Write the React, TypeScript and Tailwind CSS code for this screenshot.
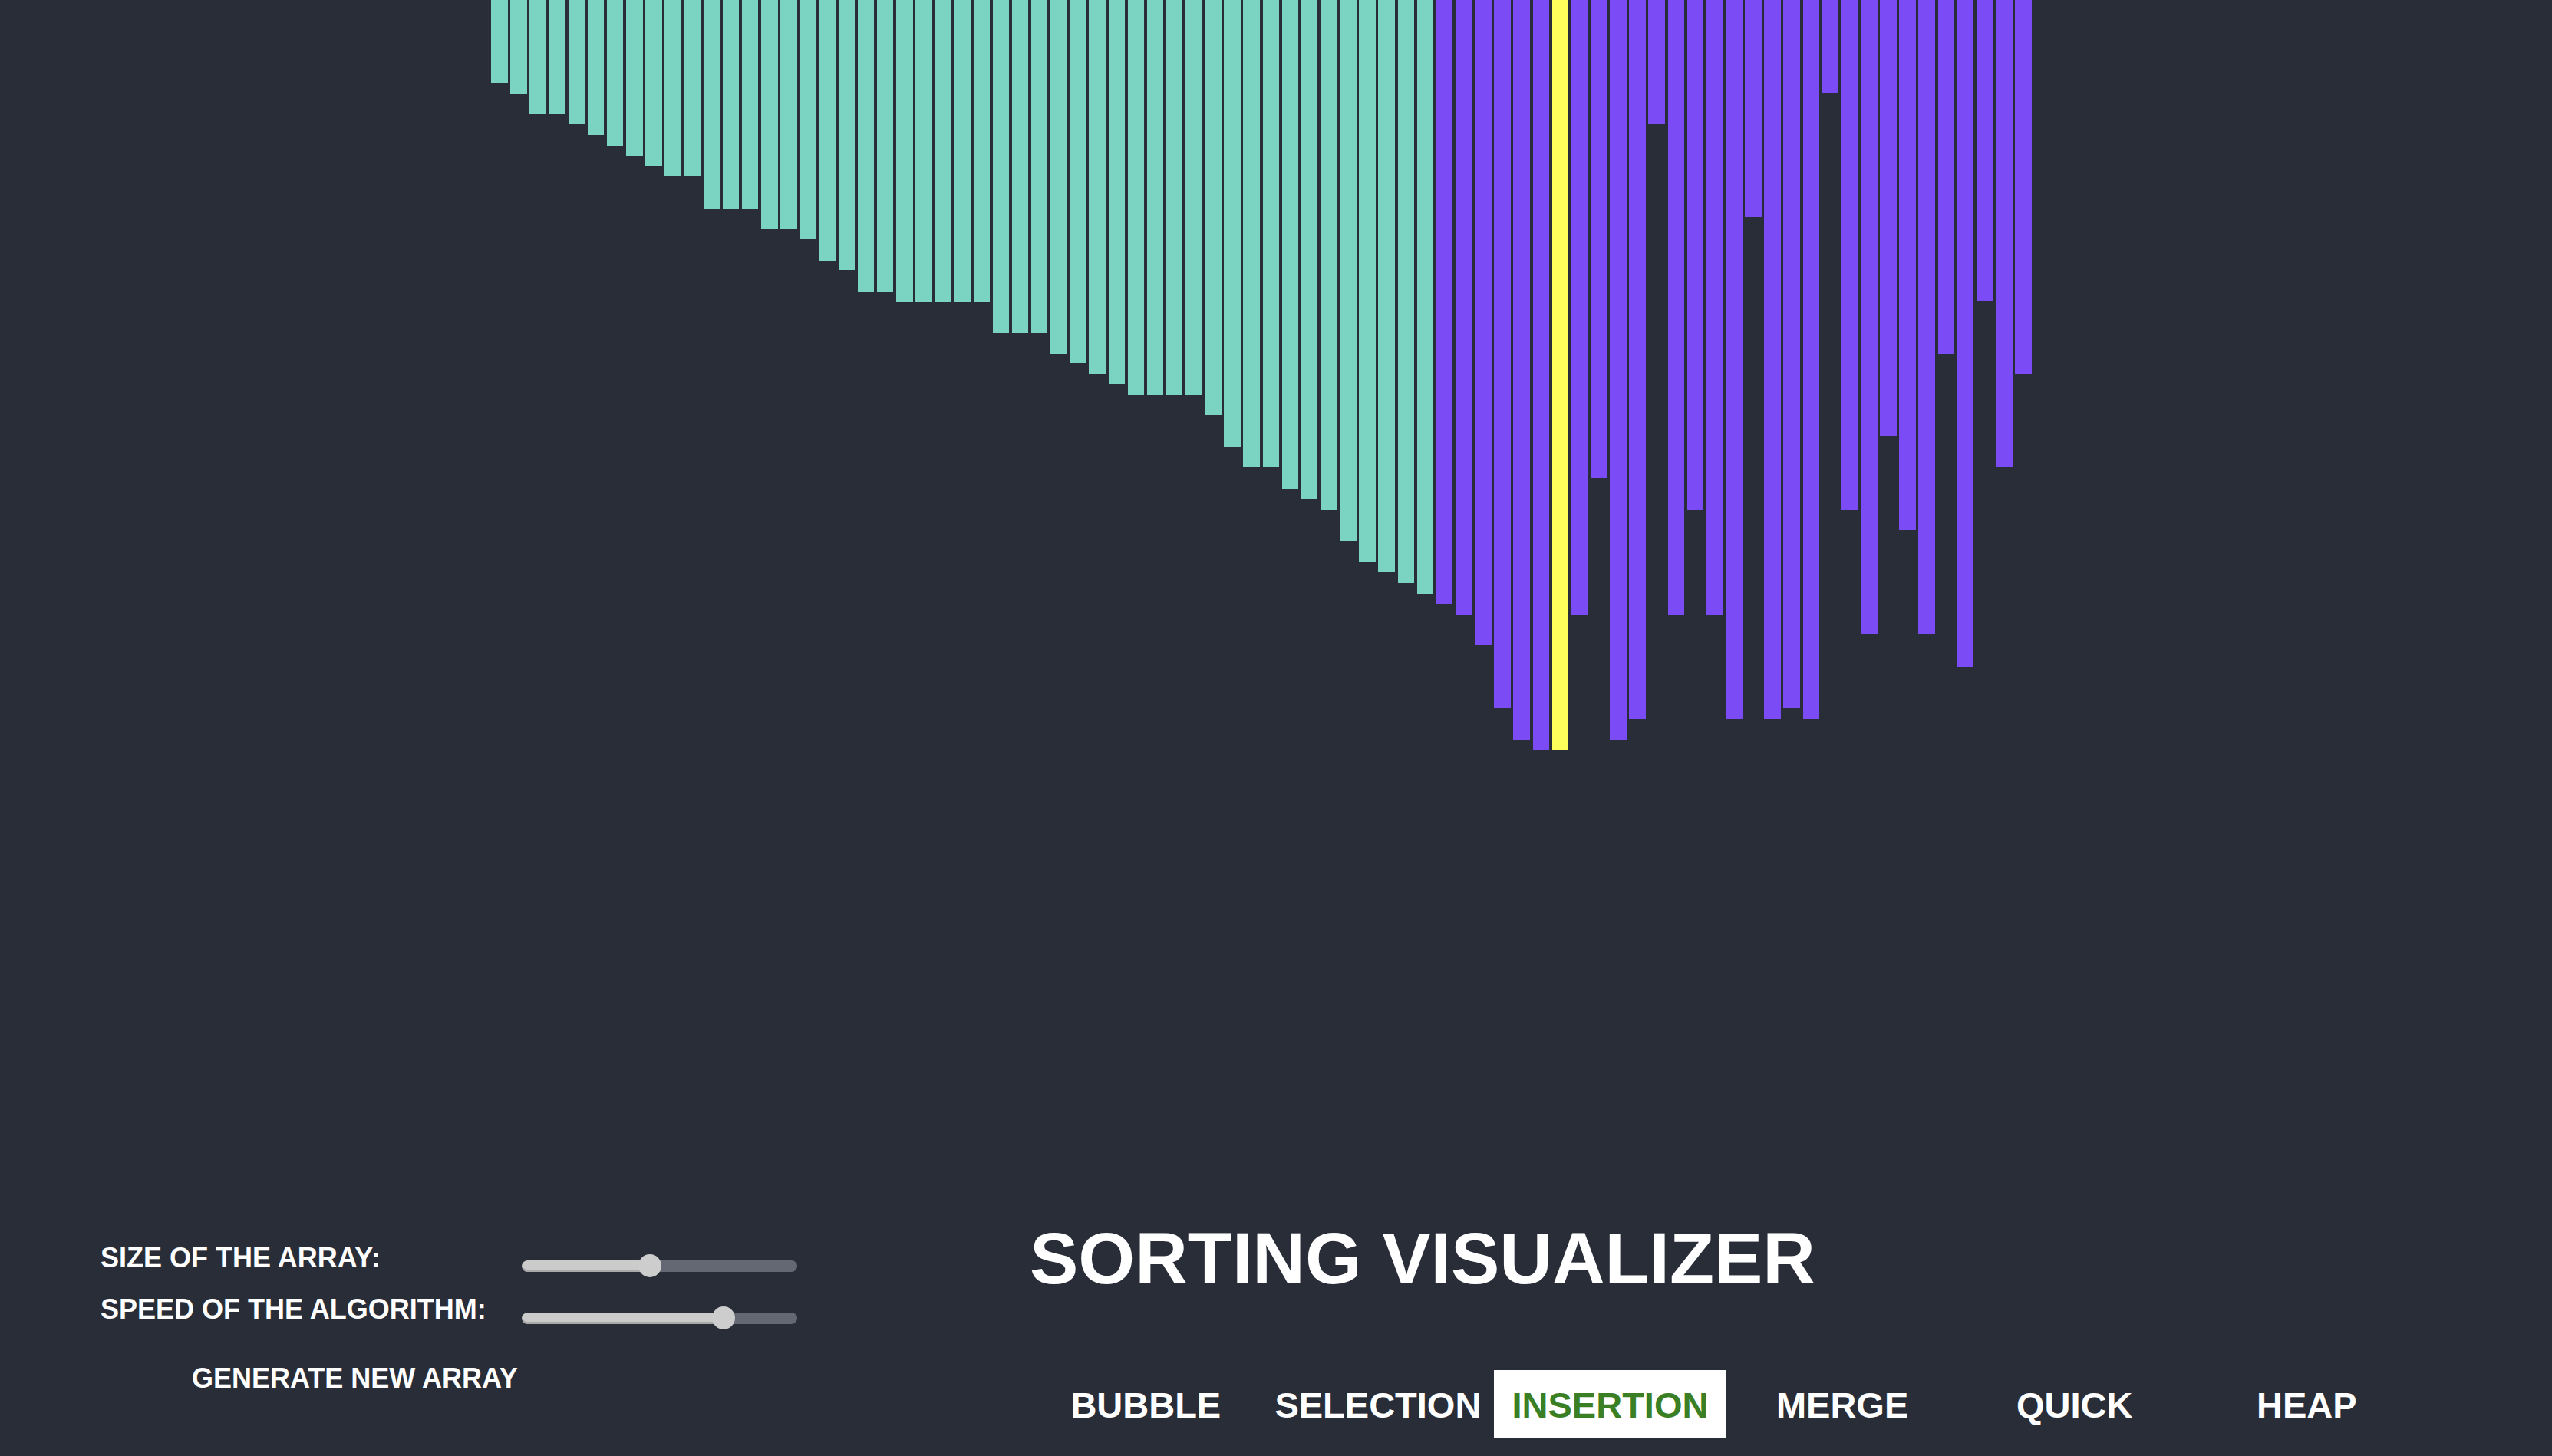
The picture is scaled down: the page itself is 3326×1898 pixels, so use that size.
import React from 'react';

const heights = [
  108, 122, 148, 148, 162, 176, 190, 204, 216, 230, 230, 272, 272, 272, 298, 298, 312, 340, 352, 380,
  380, 394, 394, 394, 394, 394, 434, 434, 434, 461, 473, 487, 501, 515, 515, 515, 515, 541, 583, 609,
  609, 637, 651, 665, 705, 733, 745, 760, 774, 788, 802, 841, 923, 964, 978, 978, 802, 623, 964, 937,
  161, 802, 665, 802, 937, 283, 937, 923, 937, 121, 665, 827, 569, 691, 827, 461, 869, 393, 609, 487,
];

const SORTED_UNTIL = 49;
const CURRENT = 55;

const algorithms = ['BUBBLE', 'SELECTION', 'INSERTION', 'MERGE', 'QUICK', 'HEAP'];

const Slider = ({ value }: { value: number }) => {
  return (
    <div className="relative w-[359px] h-[30px]">
      <div className="absolute left-0 right-0 top-[7.5px] h-[15px] rounded-full bg-[#646872] overflow-hidden">
        <div
          className="h-full rounded-l-full bg-[#cbcbcb] shadow-[inset_0_-3px_0_#a9a9a9]"
          style={{ width: `${value}px` }}
        />
      </div>
      <div
        className="absolute top-0 w-[30px] h-[30px] rounded-full bg-[#cdcdcd]"
        style={{ left: `${value - 15}px` }}
      />
    </div>
  );
};

const App = () => {
  return (
    <div className="w-[3326px] h-[1898px] overflow-hidden bg-[#282d38] font-['Liberation_Sans',Arial,sans-serif] text-white">
      {/* bars */}
      <div className="h-[1590px]">
        <div className="ml-[640px] w-[2008px] flex items-start gap-[3.6px]">
          {heights.map((h, i) => (
            <div
              key={i}
              className={
                i === CURRENT
                  ? 'flex-1 bg-[#ffff5b]'
                  : i < SORTED_UNTIL
                  ? 'flex-1 bg-[#7bd3c1]'
                  : 'flex-1 bg-[#7b4bf5]'
              }
              style={{ height: `${h}px` }}
            />
          ))}
        </div>
      </div>

      {/* controls */}
      <div className="flex">
        <div className="ml-[131px] w-[908px] pt-[32px] flex flex-col font-bold text-[36px] leading-none">
          <div className="flex items-start h-[67px]">
            <span className="w-[549px]">SIZE OF THE ARRAY:</span>
            <div className="mt-[13px]">
              <Slider value={167} />
            </div>
          </div>
          <div className="flex items-start h-[90px]">
            <span className="w-[549px]">SPEED OF THE ALGORITHM:</span>
            <div className="mt-[14px]">
              <Slider value={263} />
            </div>
          </div>
          <button className="ml-[119px] self-start font-bold leading-none">GENERATE NEW ARRAY</button>
        </div>

        <div className="ml-[303px] flex flex-col">
          <h1 className="pt-[3px] text-[95px] font-bold leading-none">SORTING VISUALIZER</h1>
          <div className="mt-[98px] flex">
            {algorithms.map((name) => (
              <button
                key={name}
                className={
                  name === 'INSERTION'
                    ? 'w-[302.6px] h-[88px] pt-[3px] flex items-center justify-center bg-white text-[#3a7f24] text-[47px] font-bold leading-none'
                    : 'w-[302.6px] h-[88px] pt-[3px] flex items-center justify-center text-white text-[47px] font-bold leading-none'
                }
              >
                {name}
              </button>
            ))}
          </div>
        </div>
      </div>
    </div>
  );
};

export default App;
